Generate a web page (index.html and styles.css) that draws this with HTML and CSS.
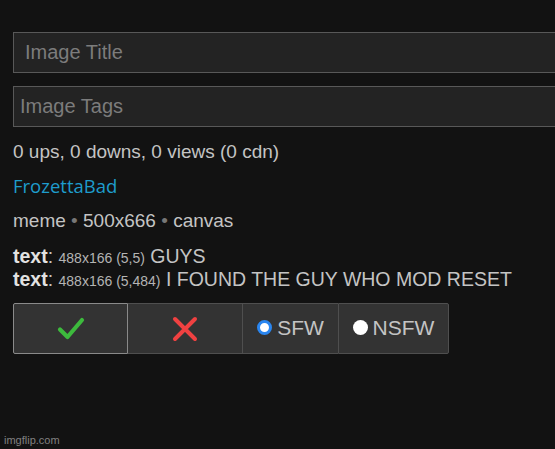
FILE: index.html
```html
<!DOCTYPE html>
<html>
<head>
<meta charset="utf-8">
<link rel="stylesheet" href="styles.css">
</head>
<body>
<div class="panel">
  <div class="field field-title">Image Title</div>
  <div class="field field-tags">Image Tags</div>
  <div class="stats">0 ups, 0 downs, 0 views (0 cdn)</div>
  <div class="user">FrozettaBad</div>
  <div class="meta">meme <span class="dot">•</span> 500x666 <span class="dot">•</span> canvas</div>
  <div class="boxes">
    <div class="box"><b>text</b>: <span class="small">488x166 (5,5)</span> GUYS</div>
    <div class="box"><b>text</b>: <span class="small">488x166 (5,484)</span> I FOUND THE GUY WHO MOD RESET</div>
  </div>
  <div class="actions">
    <div class="btn btn-approve">
      <svg width="28" height="24" viewBox="0 0 28 24"><path d="M3 12.5 L10.5 20 L25 3" fill="none" stroke="#3dba3d" stroke-width="4.2" stroke-linecap="round" stroke-linejoin="round"/></svg>
    </div>
    <div class="btn btn-reject">
      <svg width="26" height="26" viewBox="0 0 26 26"><path d="M3 3 L23 23 M23 3 L3 23" fill="none" stroke="#f04141" stroke-width="4" stroke-linecap="round"/></svg>
    </div>
    <div class="btn btn-radio"><span class="radio on"></span>SFW</div>
    <div class="btn btn-radio btn-last"><span class="radio"></span>NSFW</div>
  </div>
</div>
<div class="wm">imgflip.com</div>
</body>
</html>
```
FILE: styles.css
```css
html, body {
  margin: 0;
  padding: 0;
  background: #121212;
  height: 100%;
  overflow: hidden;
}
body {
  font-family: "Liberation Sans", Arial, sans-serif;
  color: #c4c4c4;
  position: relative;
}
.panel {
  padding: 32px 0 0 13px;
}
.field {
  box-sizing: border-box;
  width: 542px;
  height: 41px;
  background: #232323;
  border: 1px solid #585858;
  border-right: none;
  color: #7c7c7c;
  font-size: 20px;
  line-height: 39px;
}
.field-title {
  padding-left: 11px;
}
.field-tags {
  margin-top: 13px;
  padding-left: 6px;
}
.stats {
  margin-top: 13px;
  font-size: 19px;
  line-height: 23px;
}
.user {
  margin-top: 11px;
  font-family: "Open Sans", "Noto Sans", sans-serif;
  font-size: 18.5px;
  line-height: 23px;
  color: #1e9ccc;
}
.meta {
  margin-top: 12px;
  font-size: 19px;
  line-height: 23px;
}
.dot {
  color: #777;
}
.boxes {
  margin-top: 13px;
}
.box {
  font-size: 19.5px;
  line-height: 23px;
}
.box b {
  color: #e2e2e2;
}
.small {
  font-size: 14px;
  line-height: 1;
  color: #b4b4b4;
}
.actions {
  margin-top: 12px;
  display: flex;
  height: 51px;
}
.btn {
  box-sizing: border-box;
  height: 51px;
  background: #333;
  border: 1px solid #4f4f4f;
  border-right: none;
  display: flex;
  align-items: center;
  justify-content: center;
  font-size: 21px;
  color: #c4c4c4;
}
.btn-approve {
  width: 115px;
  border: 1px solid #8a8a8a;
  border-radius: 2px 0 0 2px;
}
.btn-reject {
  width: 114px;
  border-left: none;
}
.btn-radio {
  width: 96px;
  align-items: flex-start;
  padding-top: 12px;
}
.btn-last {
  width: 111px;
  border-right: 1px solid #4f4f4f;
  border-radius: 0 2px 2px 0;
}
.radio {
  box-sizing: border-box;
  width: 15px;
  height: 15px;
  border-radius: 50%;
  background: #fff;
  margin: 4px 5px 0 0;
}
.radio.on {
  border: 3px solid #2a86f0;
  background: #fff;
  box-shadow: inset 0 0 0 1px #fff;
}
.wm {
  position: absolute;
  left: 4px;
  bottom: 3px;
  font-size: 11px;
  color: #808080;
}
```
